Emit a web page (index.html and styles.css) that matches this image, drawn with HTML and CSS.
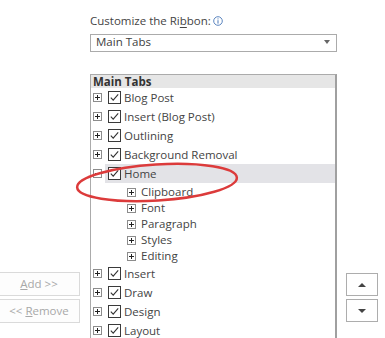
FILE: index.html
```html
<!DOCTYPE html>
<html>
<head>
<meta charset="utf-8">
<link rel="stylesheet" href="styles.css">
</head>
<body>
<div class="dialog">
  <div class="col-left">
    <button class="btn" disabled><u>A</u>dd &gt;&gt;</button>
    <button class="btn" disabled>&lt;&lt; <u>R</u>emove</button>
  </div>
  <div class="col-mid">
    <div class="label">Customize the Ri<u>b</u>bon:<svg class="info" width="10" height="10" viewBox="0 0 10 10"><circle cx="5" cy="5" r="4.3" fill="none" stroke="#4a78b8" stroke-width="0.9"/><rect x="4.5" y="4.2" width="1" height="3.4" fill="#4a78b8"/><rect x="4.5" y="2.4" width="1" height="1" fill="#4a78b8"/></svg></div>
    <div class="select"><span>Main Tabs</span><span class="caret"></span></div>
    <div class="list">
      <div class="list-head">Main Tabs</div>
      <div class="row"><svg class="exp" width="9" height="9" viewBox="0 0 9 9"><rect x=".5" y=".5" width="8" height="8" fill="#fff" stroke="#8c8c8c"/><path d="M2 4.5h5M4.5 2v5" stroke="#222"/></svg><span class="sel"><svg class="chk" width="13" height="13" viewBox="0 0 13 13"><rect x=".5" y=".5" width="12" height="12" fill="#fff" stroke="#3a3a3a"/><path d="M2.8 6.6L5.2 9.2L10.2 3.4" fill="none" stroke="#333" stroke-width="1.1"/></svg><span class="txt">Blog Post</span></span></div>
      <div class="row"><svg class="exp" width="9" height="9" viewBox="0 0 9 9"><rect x=".5" y=".5" width="8" height="8" fill="#fff" stroke="#8c8c8c"/><path d="M2 4.5h5M4.5 2v5" stroke="#222"/></svg><span class="sel"><svg class="chk" width="13" height="13" viewBox="0 0 13 13"><rect x=".5" y=".5" width="12" height="12" fill="#fff" stroke="#3a3a3a"/><path d="M2.8 6.6L5.2 9.2L10.2 3.4" fill="none" stroke="#333" stroke-width="1.1"/></svg><span class="txt">Insert (Blog Post)</span></span></div>
      <div class="row"><svg class="exp" width="9" height="9" viewBox="0 0 9 9"><rect x=".5" y=".5" width="8" height="8" fill="#fff" stroke="#8c8c8c"/><path d="M2 4.5h5M4.5 2v5" stroke="#222"/></svg><span class="sel"><svg class="chk" width="13" height="13" viewBox="0 0 13 13"><rect x=".5" y=".5" width="12" height="12" fill="#fff" stroke="#3a3a3a"/><path d="M2.8 6.6L5.2 9.2L10.2 3.4" fill="none" stroke="#333" stroke-width="1.1"/></svg><span class="txt">Outlining</span></span></div>
      <div class="row"><svg class="exp" width="9" height="9" viewBox="0 0 9 9"><rect x=".5" y=".5" width="8" height="8" fill="#fff" stroke="#8c8c8c"/><path d="M2 4.5h5M4.5 2v5" stroke="#222"/></svg><span class="sel"><svg class="chk" width="13" height="13" viewBox="0 0 13 13"><rect x=".5" y=".5" width="12" height="12" fill="#fff" stroke="#3a3a3a"/><path d="M2.8 6.6L5.2 9.2L10.2 3.4" fill="none" stroke="#333" stroke-width="1.1"/></svg><span class="txt">Background Removal</span></span></div>
      <div class="row"><svg class="exp" width="9" height="9" viewBox="0 0 9 9"><rect x=".5" y=".5" width="8" height="8" fill="#fff" stroke="#8c8c8c"/><path d="M2 4.5h5" stroke="#222"/></svg><span class="sel active"><svg class="chk" width="13" height="13" viewBox="0 0 13 13"><rect x=".5" y=".5" width="12" height="12" fill="#fff" stroke="#3a3a3a"/><path d="M2.8 6.6L5.2 9.2L10.2 3.4" fill="none" stroke="#333" stroke-width="1.1"/></svg><span class="txt">Home</span></span></div>
      <div class="sublist">
        <div class="subrow"><svg class="exp" width="9" height="9" viewBox="0 0 9 9"><rect x=".5" y=".5" width="8" height="8" fill="#fff" stroke="#8c8c8c"/><path d="M2 4.5h5M4.5 2v5" stroke="#222"/></svg><span class="txt">Clipboard</span></div>
        <div class="subrow"><svg class="exp" width="9" height="9" viewBox="0 0 9 9"><rect x=".5" y=".5" width="8" height="8" fill="#fff" stroke="#8c8c8c"/><path d="M2 4.5h5M4.5 2v5" stroke="#222"/></svg><span class="txt">Font</span></div>
        <div class="subrow"><svg class="exp" width="9" height="9" viewBox="0 0 9 9"><rect x=".5" y=".5" width="8" height="8" fill="#fff" stroke="#8c8c8c"/><path d="M2 4.5h5M4.5 2v5" stroke="#222"/></svg><span class="txt">Paragraph</span></div>
        <div class="subrow"><svg class="exp" width="9" height="9" viewBox="0 0 9 9"><rect x=".5" y=".5" width="8" height="8" fill="#fff" stroke="#8c8c8c"/><path d="M2 4.5h5M4.5 2v5" stroke="#222"/></svg><span class="txt">Styles</span></div>
        <div class="subrow"><svg class="exp" width="9" height="9" viewBox="0 0 9 9"><rect x=".5" y=".5" width="8" height="8" fill="#fff" stroke="#8c8c8c"/><path d="M2 4.5h5M4.5 2v5" stroke="#222"/></svg><span class="txt">Editing</span></div>
      </div>
      <div class="row"><svg class="exp" width="9" height="9" viewBox="0 0 9 9"><rect x=".5" y=".5" width="8" height="8" fill="#fff" stroke="#8c8c8c"/><path d="M2 4.5h5M4.5 2v5" stroke="#222"/></svg><span class="sel"><svg class="chk" width="13" height="13" viewBox="0 0 13 13"><rect x=".5" y=".5" width="12" height="12" fill="#fff" stroke="#3a3a3a"/><path d="M2.8 6.6L5.2 9.2L10.2 3.4" fill="none" stroke="#333" stroke-width="1.1"/></svg><span class="txt">Insert</span></span></div>
      <div class="row"><svg class="exp" width="9" height="9" viewBox="0 0 9 9"><rect x=".5" y=".5" width="8" height="8" fill="#fff" stroke="#8c8c8c"/><path d="M2 4.5h5M4.5 2v5" stroke="#222"/></svg><span class="sel"><svg class="chk" width="13" height="13" viewBox="0 0 13 13"><rect x=".5" y=".5" width="12" height="12" fill="#fff" stroke="#3a3a3a"/><path d="M2.8 6.6L5.2 9.2L10.2 3.4" fill="none" stroke="#333" stroke-width="1.1"/></svg><span class="txt">Draw</span></span></div>
      <div class="row"><svg class="exp" width="9" height="9" viewBox="0 0 9 9"><rect x=".5" y=".5" width="8" height="8" fill="#fff" stroke="#8c8c8c"/><path d="M2 4.5h5M4.5 2v5" stroke="#222"/></svg><span class="sel"><svg class="chk" width="13" height="13" viewBox="0 0 13 13"><rect x=".5" y=".5" width="12" height="12" fill="#fff" stroke="#3a3a3a"/><path d="M2.8 6.6L5.2 9.2L10.2 3.4" fill="none" stroke="#333" stroke-width="1.1"/></svg><span class="txt">Design</span></span></div>
      <div class="row"><svg class="exp" width="9" height="9" viewBox="0 0 9 9"><rect x=".5" y=".5" width="8" height="8" fill="#fff" stroke="#8c8c8c"/><path d="M2 4.5h5M4.5 2v5" stroke="#222"/></svg><span class="sel"><svg class="chk" width="13" height="13" viewBox="0 0 13 13"><rect x=".5" y=".5" width="12" height="12" fill="#fff" stroke="#3a3a3a"/><path d="M2.8 6.6L5.2 9.2L10.2 3.4" fill="none" stroke="#333" stroke-width="1.1"/></svg><span class="txt">Layout</span></span></div>
    </div>
  </div>
  <div class="col-right">
    <button class="arrow-btn" aria-label="Move Up"><span class="tri-up"></span></button>
    <button class="arrow-btn" aria-label="Move Down"><span class="tri-down"></span></button>
  </div>
  <svg class="mark" width="180" height="60" viewBox="0 0 180 60"><ellipse cx="87" cy="27.5" rx="80" ry="18" transform="rotate(-3.5 87 27.5)" fill="none" stroke="#dc3b3b" stroke-width="2.5"/></svg>
</div>
</body>
</html>
```

FILE: styles.css
```css
html, body {
  margin: 0;
  padding: 0;
  background: #ffffff;
}
body {
  font-family: "Open Sans", "Noto Sans", "Liberation Sans", sans-serif;
  font-size: 11.5px;
  color: #444444;
}
.dialog {
  position: relative;
  display: flex;
  width: 385px;
  height: 338px;
  overflow: hidden;
  background: #ffffff;
}
.col-left {
  width: 90px;
  flex: none;
  display: flex;
  flex-direction: column;
  gap: 3px;
  padding-top: 272px;
  box-sizing: border-box;
}
.btn {
  width: 82px;
  height: 24px;
  margin-left: -2px;
  box-sizing: border-box;
  border: 1px solid #dadada;
  background: #fdfdfd;
  color: #a8a8a8;
  font-family: inherit;
  font-size: 11.5px;
  padding: 0;
  line-height: 20px;
  text-align: center;
}
.col-mid {
  width: 247px;
  flex: none;
  padding-top: 13px;
  box-sizing: border-box;
  display: flex;
  flex-direction: column;
}
.label {
  height: 15px;
  line-height: 15px;
  margin-bottom: 6px;
  display: flex;
  align-items: center;
  white-space: nowrap;
}
.label u {
  text-underline-offset: 2px;
}
.info {
  margin-left: 2px;
}
.select {
  height: 18px;
  box-sizing: border-box;
  border: 1px solid #ababab;
  display: flex;
  align-items: flex-start;
  justify-content: space-between;
  padding: 0 6px 0 5px;
  line-height: 13px;
  color: #404040;
  margin-bottom: 22px;
}
.caret {
  width: 0;
  height: 0;
  margin-top: 5px;
  border-left: 3.5px solid transparent;
  border-right: 3.5px solid transparent;
  border-top: 4px solid #666666;
}
.list {
  flex: 1;
  border: 1px solid #ababab;
  border-right: 2px solid #a0a0a0;
  border-bottom: none;
  overflow: hidden;
}
.list-head {
  height: 13px;
  line-height: 13px;
  background: #e6e6e6;
  font-weight: 700;
  color: #333333;
  padding-left: 2px;
  white-space: nowrap;
}
.row {
  height: 19px;
  display: flex;
  align-items: center;
  padding-left: 2px;
  white-space: nowrap;
}
.exp {
  flex: none;
  display: block;
}
.sel {
  flex: 1;
  height: 100%;
  display: flex;
  align-items: center;
  margin-left: 3px;
  padding-left: 3px;
}
.sel.active {
  background: #e3e3e7;
}
.chk {
  flex: none;
  display: block;
}
.txt {
  margin-left: 3px;
  line-height: 19px;
}
.sublist {
  padding-top: 1px;
}
.subrow {
  height: 16px;
  display: flex;
  align-items: center;
  padding-left: 36px;
  white-space: nowrap;
}
.subrow .txt {
  margin-left: 5px;
  line-height: 16px;
}
.col-right {
  width: 32px;
  flex: none;
  margin-left: 9px;
  padding-top: 273px;
  display: flex;
  flex-direction: column;
  gap: 3px;
}
.arrow-btn {
  width: 32px;
  height: 23px;
  box-sizing: border-box;
  border: 1px solid #adadad;
  background: #ffffff;
  padding: 0;
  display: flex;
  align-items: center;
  justify-content: center;
}
.tri-up {
  width: 0;
  height: 0;
  border-left: 4px solid transparent;
  border-right: 4px solid transparent;
  border-bottom: 4px solid #444444;
}
.tri-down {
  width: 0;
  height: 0;
  border-left: 4px solid transparent;
  border-right: 4px solid transparent;
  border-top: 4px solid #444444;
}
.mark {
  position: absolute;
  left: 70px;
  top: 155px;
  pointer-events: none;
}
```
